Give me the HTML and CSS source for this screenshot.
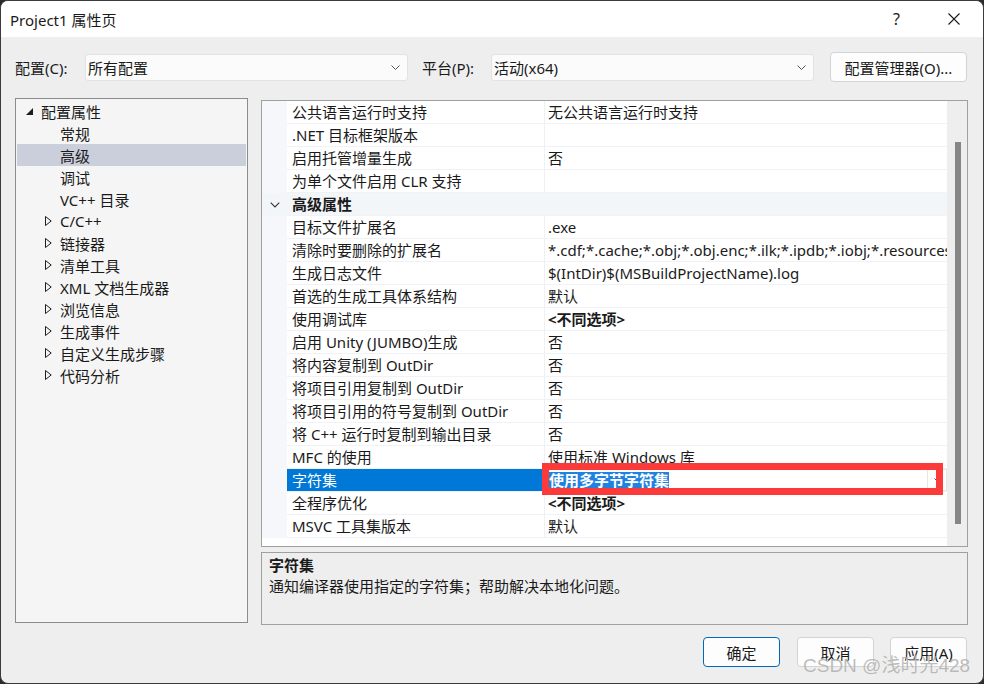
FILE: index.html
```html
<!DOCTYPE html>
<html lang="zh-CN">
<head>
<meta charset="utf-8">
<title>Project1 属性页</title>
<link rel="stylesheet" href="styles.css">
</head>
<body>
<div class="window">
  <div class="titlebar">
    <div class="title">Project1 属性页</div>
    <div class="tb-btn help">?</div>
    <div class="tb-btn close"><svg width="12" height="12" viewBox="0 0 12 12"><path d="M0.5 0.5L11.5 11.5M11.5 0.5L0.5 11.5" stroke="#1a1a1a" stroke-width="1.1" fill="none"/></svg></div>
  </div>
  <div class="client">
    <div class="config-row">
      <span class="lbl lbl-config">配置(C):</span>
      <div class="combo"><span>所有配置</span><svg width="9" height="5" viewBox="0 0 9 5"><path d="M0.5 0.5L4.5 4.5L8.5 0.5" stroke="#555" fill="none"/></svg></div>
      <span class="lbl lbl-platform">平台(P):</span>
      <div class="combo"><span>活动(x64)</span><svg width="9" height="5" viewBox="0 0 9 5"><path d="M0.5 0.5L4.5 4.5L8.5 0.5" stroke="#555" fill="none"/></svg></div>
      <button class="btn btn-mgr">配置管理器(O)...</button>
    </div>
    <div class="main">
      <div class="tree">
        <div class="tnode lv1"><span class="ti"><svg width="7" height="7" viewBox="0 0 7 7"><path d="M7 0V7H0Z" fill="#1e1e1e"/></svg></span>配置属性</div>
        <div class="tnode leaf">常规</div>
        <div class="tnode leaf sel">高级</div>
        <div class="tnode leaf">调试</div>
        <div class="tnode leaf">VC++ 目录</div>
        <div class="tnode lv2"><span class="ti"><svg width="7" height="10" viewBox="0 0 7 10"><path d="M0.5 0.5L6.2 5L0.5 9.5Z" fill="none" stroke="#1e1e1e"/></svg></span>C/C++</div>
        <div class="tnode lv2"><span class="ti"><svg width="7" height="10" viewBox="0 0 7 10"><path d="M0.5 0.5L6.2 5L0.5 9.5Z" fill="none" stroke="#1e1e1e"/></svg></span>链接器</div>
        <div class="tnode lv2"><span class="ti"><svg width="7" height="10" viewBox="0 0 7 10"><path d="M0.5 0.5L6.2 5L0.5 9.5Z" fill="none" stroke="#1e1e1e"/></svg></span>清单工具</div>
        <div class="tnode lv2"><span class="ti"><svg width="7" height="10" viewBox="0 0 7 10"><path d="M0.5 0.5L6.2 5L0.5 9.5Z" fill="none" stroke="#1e1e1e"/></svg></span>XML 文档生成器</div>
        <div class="tnode lv2"><span class="ti"><svg width="7" height="10" viewBox="0 0 7 10"><path d="M0.5 0.5L6.2 5L0.5 9.5Z" fill="none" stroke="#1e1e1e"/></svg></span>浏览信息</div>
        <div class="tnode lv2"><span class="ti"><svg width="7" height="10" viewBox="0 0 7 10"><path d="M0.5 0.5L6.2 5L0.5 9.5Z" fill="none" stroke="#1e1e1e"/></svg></span>生成事件</div>
        <div class="tnode lv2"><span class="ti"><svg width="7" height="10" viewBox="0 0 7 10"><path d="M0.5 0.5L6.2 5L0.5 9.5Z" fill="none" stroke="#1e1e1e"/></svg></span>自定义生成步骤</div>
        <div class="tnode lv2"><span class="ti"><svg width="7" height="10" viewBox="0 0 7 10"><path d="M0.5 0.5L6.2 5L0.5 9.5Z" fill="none" stroke="#1e1e1e"/></svg></span>代码分析</div>
      </div>
      <div class="right">
        <div class="grid">
          <div class="rows">
            <div class="row"><div class="gut"></div><div class="name">公共语言运行时支持</div><div class="val">无公共语言运行时支持</div></div>
            <div class="row"><div class="gut"></div><div class="name">.NET 目标框架版本</div><div class="val"></div></div>
            <div class="row"><div class="gut"></div><div class="name">启用托管增量生成</div><div class="val">否</div></div>
            <div class="row"><div class="gut"></div><div class="name">为单个文件启用 CLR 支持</div><div class="val"></div></div>
            <div class="row cat"><div class="gut"><svg width="10" height="6" viewBox="0 0 10 6"><path d="M0.7 0.7L5 5L9.3 0.7" stroke="#333" stroke-width="1.1" fill="none"/></svg></div><div class="name">高级属性</div></div>
            <div class="row"><div class="gut"></div><div class="name">目标文件扩展名</div><div class="val">.exe</div></div>
            <div class="row"><div class="gut"></div><div class="name">清除时要删除的扩展名</div><div class="val">*.cdf;*.cache;*.obj;*.obj.enc;*.ilk;*.ipdb;*.iobj;*.resources;*.tlb;*.tli;*.tlh;*.tmp;*.rsp;*.pgc;*.pgd;*.meta;*.tlog;*.manifest;*.res;*.pch;*.exp;*.idb</div></div>
            <div class="row"><div class="gut"></div><div class="name">生成日志文件</div><div class="val">$(IntDir)$(MSBuildProjectName).log</div></div>
            <div class="row"><div class="gut"></div><div class="name">首选的生成工具体系结构</div><div class="val">默认</div></div>
            <div class="row"><div class="gut"></div><div class="name">使用调试库</div><div class="val strong">&lt;不同选项&gt;</div></div>
            <div class="row"><div class="gut"></div><div class="name">启用 Unity (JUMBO)生成</div><div class="val">否</div></div>
            <div class="row"><div class="gut"></div><div class="name">将内容复制到 OutDir</div><div class="val">否</div></div>
            <div class="row"><div class="gut"></div><div class="name">将项目引用复制到 OutDir</div><div class="val">否</div></div>
            <div class="row"><div class="gut"></div><div class="name">将项目引用的符号复制到 OutDir</div><div class="val">否</div></div>
            <div class="row"><div class="gut"></div><div class="name">将 C++ 运行时复制到输出目录</div><div class="val">否</div></div>
            <div class="row"><div class="gut"></div><div class="name">MFC 的使用</div><div class="val">使用标准 Windows 库</div></div>
            <div class="row sel"><div class="gut"></div><div class="name">字符集</div><div class="val"><span class="hl">使用多字节字符集</span><span class="dd"><svg width="7" height="4" viewBox="0 0 7 4"><path d="M0.5 0.5L3.5 3.5L6.5 0.5" stroke="#555" fill="none"/></svg></span></div></div>
            <div class="row"><div class="gut"></div><div class="name">全程序优化</div><div class="val strong">&lt;不同选项&gt;</div></div>
            <div class="row"><div class="gut"></div><div class="name">MSVC 工具集版本</div><div class="val">默认</div></div>
          </div>
          <div class="vscroll"><div class="thumb"></div></div>
          <div class="annot"></div>
        </div>
        <div class="desc">
          <div class="desc-title">字符集</div>
          <div class="desc-text">通知编译器使用指定的字符集；帮助解决本地化问题。</div>
        </div>
      </div>
    </div>
    <div class="buttons">
      <button class="btn btn-ok">确定</button>
      <button class="btn btn-cancel">取消</button>
      <button class="btn btn-apply">应用(A)</button>
    </div>
  </div>
  <div class="watermark">CSDN @浅时光428</div>
</div>
</body>
</html>
```

FILE: styles.css
```css
* { box-sizing: border-box; }
html, body { margin: 0; padding: 0; }
body {
  width: 984px;
  height: 684px;
  overflow: hidden;
  background: #2b2b2b;
  font-family: "Noto Sans", "Noto Sans CJK SC", sans-serif;
  font-size: 15px;
  color: #1a1a1a;
}
.window {
  position: relative;
  width: 984px;
  height: 684px;
  border: 1px solid #3a3a3a;
  border-radius: 8px;
  overflow: hidden;
  background: #eeeeee;
  display: flex;
  flex-direction: column;
}
.titlebar {
  flex: none;
  height: 36px;
  background: #ffffff;
  display: flex;
  align-items: center;
  padding: 0 1px 0 9px;
}
.title { flex: 1; }
.tb-btn {
  width: 57px;
  height: 36px;
  display: flex;
  align-items: center;
  justify-content: center;
}
.help { font-size: 16px; }
.client {
  flex: 1;
  padding: 15px 15px 0 14px;
  display: flex;
  flex-direction: column;
}
.config-row {
  height: 30px;
  display: flex;
  align-items: center;
}
.lbl { flex: none; white-space: nowrap; }
.lbl-config { width: 70px; }
.lbl-platform { width: 69px; margin-left: 14px; }
.combo {
  flex: none;
  width: 323px;
  height: 27px;
  background: #fbfbfb;
  border: 1px solid #e2e2e2;
  border-radius: 3px;
  display: flex;
  align-items: center;
  justify-content: space-between;
  padding: 0 7px 0 2px;
}
.btn {
  font: inherit;
  color: #1a1a1a;
  background: #fdfdfd;
  border: 1px solid #d3d3d3;
  border-radius: 4px;
  padding: 0;
}
.btn-mgr { flex: none; margin-left: 16px; width: 137px; height: 30px; }
.main {
  margin-top: 16px;
  display: flex;
  align-items: flex-start;
  gap: 13px;
}
.tree {
  flex: none;
  width: 233px;
  height: 525px;
  border: 1px solid #8c8c8c;
  background: #f5f5f5;
  padding: 1px;
}
.tnode {
  height: 22px;
  display: flex;
  align-items: center;
  white-space: nowrap;
}
.tnode.sel { background: #cbcedb; }
.ti { width: 15px; display: flex; align-items: center; }
.lv1 { padding-left: 9px; }
.lv2 { padding-left: 28px; }
.leaf { padding-left: 43px; }
.right {
  flex: none;
  width: 707px;
  margin-top: 2px;
  display: flex;
  flex-direction: column;
  gap: 5px;
}
.grid {
  position: relative;
  height: 447px;
  border: 1px solid #a0a0a0;
  background: #ffffff;
  display: flex;
}
.rows { width: 685px; flex: none; }
.row { display: flex; height: 23px; }
.gut {
  flex: none;
  width: 25px;
  background: #f5f7fa;
  display: flex;
  align-items: center;
  justify-content: center;
}
.name {
  flex: none;
  width: 258px;
  line-height: 22px;
  padding-left: 5px;
  border-right: 1px solid #eef0f3;
  border-bottom: 1px solid #f0f2f5;
  white-space: nowrap;
  overflow: hidden;
}
.val {
  flex: 1;
  min-width: 0;
  line-height: 22px;
  padding-left: 3px;
  border-bottom: 1px solid #f0f2f5;
  white-space: nowrap;
  overflow: hidden;
}
.strong { font-weight: bold; }
.row.cat { background: #f3f6f9; }
.row.cat .gut { background: transparent; }
.row.cat .name { flex: 1; width: auto; font-weight: bold; border-right: none; }
.row.sel .name { background: #0078d7; color: #ffffff; }
.row.sel .val {
  display: flex;
  align-items: center;
  justify-content: space-between;
  padding-right: 0;
}
.hl {
  background: #1f82e0;
  color: #ffffff;
  font-weight: bold;
  line-height: 17px;
  padding-left: 1px;
}
.dd {
  width: 20px;
  height: 22px;
  border: 1px solid #e6e6e6;
  display: flex;
  align-items: center;
  justify-content: center;
  background: #fff;
}
.vscroll {
  flex: none;
  width: 20px;
  background: #eeeeee;
}
.thumb {
  margin: 41px 0 0 8px;
  width: 6px;
  height: 382px;
  background: #868686;
}
.annot {
  position: absolute;
  left: 280px;
  top: 362px;
  width: 401px;
  height: 32px;
  border: 7px solid #fc3a3a;
}
.desc {
  height: 73px;
  border: 1px solid #a0a0a0;
  background: #eeeeee;
  padding: 2px 7px;
}
.desc-title { font-weight: bold; line-height: 20px; }
.desc-text { line-height: 22px; }
.buttons {
  margin-top: 12px;
  display: flex;
  justify-content: flex-end;
  padding-right: 1px;
}
.buttons .btn { width: 77px; height: 30px; }
.btn-ok { margin-right: 17px; border-color: #0067c0; }
.btn-cancel { margin-right: 16px; }
.watermark {
  position: absolute;
  left: 802px;
  top: 649px;
  font-family: "Liberation Sans", "Noto Sans CJK SC", sans-serif;
  font-size: 19px;
  color: rgba(120, 120, 120, 0.5);
  text-shadow: 0 0 1px rgba(255, 255, 255, 0.8);
  white-space: nowrap;
}
```
